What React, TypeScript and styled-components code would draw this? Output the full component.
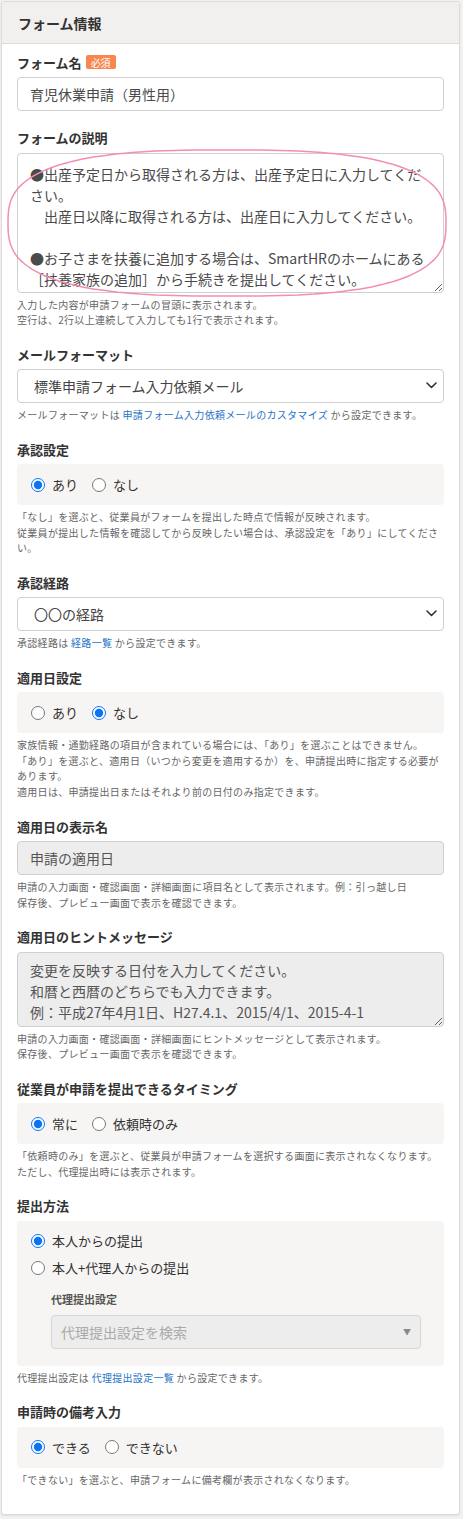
import styled, { createGlobalStyle } from "styled-components";

const GlobalStyle = createGlobalStyle`
  html, body {
    margin: 0;
    background: #f3f2f0;
  }
  body {
    font-family: "Noto Sans CJK JP", "Noto Sans", sans-serif;
    color: #333;
  }
  * { box-sizing: border-box; }
`;

const Page = styled.div`
  padding: 1px 3px 6px 1px;
`;

const Card = styled.section`
  background: #fff;
  border: 1px solid #dcdbd8;
  border-radius: 3px;
  box-shadow: 0 1px 2px rgba(0, 0, 0, 0.08);
  overflow: hidden;
`;

const CardHeader = styled.header`
  height: 42px;
  display: flex;
  align-items: center;
  padding: 0 16px;
  background: #f1f0ee;
  border-bottom: 1px solid #dcdbd8;
  font-size: 14px;
  font-weight: 700;
  color: #333;
`;

const CardBody = styled.div`
  display: flex;
  flex-direction: column;
  gap: 17.6px;
  padding: 9px 15px 27px;
`;

const Field = styled.div`
  position: relative;
`;

const Label = styled.div`
  display: flex;
  align-items: center;
  gap: 4px;
  height: 18px;
  margin-bottom: 6px;
  font-size: 13px;
  font-weight: 700;
  color: #333;
`;

const Required = styled.span`
  display: inline-flex;
  align-items: center;
  height: 14px;
  padding: 0 5px;
  border-radius: 2px;
  background: #f7864f;
  color: #fff;
  font-size: 10px;
  font-weight: 400;
`;

const TextInput = styled.input`
  display: block;
  width: 100%;
  height: 34px;
  padding: 0 12px;
  border: 1px solid #cfcfcf;
  border-radius: 4px;
  font-family: inherit;
  font-size: 14px;
  color: #4a4a4a;
  background: #fff;

  &:disabled {
    background: #ededed;
    color: #555;
    -webkit-text-fill-color: #555;
    opacity: 1;
  }
`;

const TextArea = styled.textarea<{ $height: number; $padTop: number }>`
  display: block;
  width: 100%;
  height: ${(p) => p.$height}px;
  padding: ${(p) => p.$padTop}px 12px 4px;
  border: 1px solid #cfcfcf;
  border-radius: 4px;
  font-family: "Noto Sans CJK JP", sans-serif;
  font-size: 14px;
  line-height: 21px;
  color: #4a4a4a;
  background: #fff;
  resize: vertical;
  overflow: hidden;

  &:disabled {
    background: #ededed;
    color: #555;
    -webkit-text-fill-color: #555;
    opacity: 1;
  }
`;

const SelectWrap = styled.div`
  position: relative;
`;

const Select = styled.select`
  display: block;
  width: 100%;
  height: 34px;
  padding: 0 30px 0 16px;
  border: 1px solid #cfcfcf;
  border-radius: 4px;
  font-family: inherit;
  font-size: 14px;
  color: #444;
  background: #fff;
  appearance: none;
`;

const Chevron = styled.svg`
  position: absolute;
  right: 7px;
  top: 13px;
  pointer-events: none;
`;

const Help = styled.p`
  margin: 4px 0 0;
  font-size: 10px;
  letter-spacing: 0.3px;
  line-height: 15.5px;
  color: #666;
`;

const Link = styled.a`
  color: #1f74c4;
  text-decoration: none;
`;

const RadioBox = styled.div<{ $stacked?: boolean }>`
  display: flex;
  flex-direction: ${(p) => (p.$stacked ? "column" : "row")};
  align-items: ${(p) => (p.$stacked ? "stretch" : "center")};
  gap: ${(p) => (p.$stacked ? "9px" : "14px")};
  min-height: 41px;
  padding: ${(p) => (p.$stacked ? "11px 23px 17px 14px" : "0 14px")};
  background: #f6f5f3;
  border-radius: 4px;
`;

const RadioLabel = styled.label`
  display: flex;
  align-items: center;
  gap: 7px;
  height: 18px;
  font-size: 13px;
  color: #333;
`;

const Radio = styled.input`
  width: 14px;
  height: 14px;
  margin: 0;
  accent-color: #0a74f5;
`;

const SubBlock = styled.div`
  margin: 5px 0 0 20px;
`;

const SubLabel = styled.div`
  height: 16px;
  display: flex;
  align-items: center;
  margin-bottom: 8px;
  font-size: 11px;
  font-weight: 700;
  color: #555;
`;

const SearchSelect = styled.div`
  display: flex;
  align-items: center;
  height: 34px;
  padding: 0 9px;
  border: 1px solid #d6d6d6;
  border-radius: 4px;
  background: #ededed;
  font-size: 14px;
  color: #aaa;
`;

const Caret = styled.span`
  margin-left: auto;
  font-size: 8px;
  color: #888;
`;

// pink hand-drawn style highlight around the description textarea
const Annotation = styled.svg`
  position: absolute;
  left: -10px;
  top: 20px;
  pointer-events: none;
  overflow: visible;
`;

function squirclePath(cx: number, cy: number, a: number, b: number, n: number) {
  const pts: string[] = [];
  for (let i = 0; i <= 180; i++) {
    const t = (i / 180) * Math.PI * 2;
    const c = Math.cos(t);
    const s = Math.sin(t);
    const x = cx + a * Math.sign(c) * Math.pow(Math.abs(c), 2 / n);
    const y = cy + b * Math.sign(s) * Math.pow(Math.abs(s), 2 / n);
    pts.push(`${x.toFixed(1)},${y.toFixed(1)}`);
  }
  return `M${pts.join("L")}Z`;
}

function ChevronIcon() {
  return (
    <Chevron width="11" height="7" viewBox="0 0 11 7">
      <path d="M1 1l4.5 4.5L10 1" fill="none" stroke="#333" strokeWidth="1.6" strokeLinecap="round" strokeLinejoin="round" />
    </Chevron>
  );
}

type Option = { label: string; checked?: boolean };

function RadioGroup({ name, options }: { name: string; options: Option[] }) {
  return (
    <RadioBox>
      {options.map((o) => (
        <RadioLabel key={o.label}>
          <Radio type="radio" name={name} defaultChecked={o.checked} />
          {o.label}
        </RadioLabel>
      ))}
    </RadioBox>
  );
}

const description =
  "●出産予定日から取得される方は、出産予定日に入力してください。\n　出産日以降に取得される方は、出産日に入力してください。\n\n●お子さまを扶養に追加する場合は、SmartHRのホームにある［扶養家族の追加］から手続きを提出してください。";

const hint =
  "変更を反映する日付を入力してください。\n和暦と西暦のどちらでも入力できます。\n例：平成27年4月1日、H27.4.1、2015/4/1、2015-4-1";

export default function App() {
  return (
    <>
      <GlobalStyle />
      <Page>
        <Card>
          <CardHeader>フォーム情報</CardHeader>
          <CardBody>
            <Field>
              <Label>
                フォーム名<Required>必須</Required>
              </Label>
              <TextInput defaultValue="育児休業申請（男性用）" />
            </Field>

            <Field>
              <Label>フォームの説明</Label>
              <TextArea $height={140} $padTop={10} defaultValue={description} />
              <Annotation width="440" height="148">
                <path d={squirclePath(220, 74, 219, 73, 2.8)} fill="none" stroke="#f28db3" strokeWidth="1.5" />
              </Annotation>
              <Help>
                入力した内容が申請フォームの冒頭に表示されます。
                <br />
                空行は、2行以上連続して入力しても1行で表示されます。
              </Help>
            </Field>

            <Field>
              <Label>メールフォーマット</Label>
              <SelectWrap>
                <Select defaultValue="std">
                  <option value="std">標準申請フォーム入力依頼メール</option>
                </Select>
                <ChevronIcon />
              </SelectWrap>
              <Help>
                メールフォーマットは <Link href="#">申請フォーム入力依頼メールのカスタマイズ</Link> から設定できます。
              </Help>
            </Field>

            <Field>
              <Label>承認設定</Label>
              <RadioGroup name="approval" options={[{ label: "あり", checked: true }, { label: "なし" }]} />
              <Help>
                「なし」を選ぶと、従業員がフォームを提出した時点で情報が反映されます。
                <br />
                従業員が提出した情報を確認してから反映したい場合は、承認設定を「あり」にしてください。
              </Help>
            </Field>

            <Field>
              <Label>承認経路</Label>
              <SelectWrap>
                <Select defaultValue="route">
                  <option value="route">〇〇の経路</option>
                </Select>
                <ChevronIcon />
              </SelectWrap>
              <Help>
                承認経路は <Link href="#">経路一覧</Link> から設定できます。
              </Help>
            </Field>

            <Field>
              <Label>適用日設定</Label>
              <RadioGroup name="applyDate" options={[{ label: "あり" }, { label: "なし", checked: true }]} />
              <Help>
                家族情報・通勤経路の項目が含まれている場合には、「あり」を選ぶことはできません。
                <br />
                「あり」を選ぶと、適用日（いつから変更を適用するか）を、申請提出時に指定する必要があります。
                <br />
                適用日は、申請提出日またはそれより前の日付のみ指定できます。
              </Help>
            </Field>

            <Field>
              <Label>適用日の表示名</Label>
              <TextInput disabled defaultValue="申請の適用日" />
              <Help>
                申請の入力画面・確認画面・詳細画面に項目名として表示されます。例：引っ越し日
                <br />
                保存後、プレビュー画面で表示を確認できます。
              </Help>
            </Field>

            <Field>
              <Label>適用日のヒントメッセージ</Label>
              <TextArea $height={75} $padTop={7} disabled defaultValue={hint} />
              <Help>
                申請の入力画面・確認画面・詳細画面にヒントメッセージとして表示されます。
                <br />
                保存後、プレビュー画面で表示を確認できます。
              </Help>
            </Field>

            <Field>
              <Label>従業員が申請を提出できるタイミング</Label>
              <RadioGroup name="timing" options={[{ label: "常に", checked: true }, { label: "依頼時のみ" }]} />
              <Help>
                「依頼時のみ」を選ぶと、従業員が申請フォームを選択する画面に表示されなくなります。
                <br />
                ただし、代理提出時には表示されます。
              </Help>
            </Field>

            <Field>
              <Label>提出方法</Label>
              <RadioBox $stacked>
                <RadioLabel>
                  <Radio type="radio" name="method" defaultChecked />
                  本人からの提出
                </RadioLabel>
                <RadioLabel>
                  <Radio type="radio" name="method" />
                  本人+代理人からの提出
                </RadioLabel>
                <SubBlock>
                  <SubLabel>代理提出設定</SubLabel>
                  <SearchSelect>
                    代理提出設定を検索
                    <Caret>▼</Caret>
                  </SearchSelect>
                </SubBlock>
              </RadioBox>
              <Help>
                代理提出設定は <Link href="#">代理提出設定一覧</Link> から設定できます。
              </Help>
            </Field>

            <Field>
              <Label>申請時の備考入力</Label>
              <RadioGroup name="remarks" options={[{ label: "できる", checked: true }, { label: "できない" }]} />
              <Help>「できない」を選ぶと、申請フォームに備考欄が表示されなくなります。</Help>
            </Field>
          </CardBody>
        </Card>
      </Page>
    </>
  );
}
